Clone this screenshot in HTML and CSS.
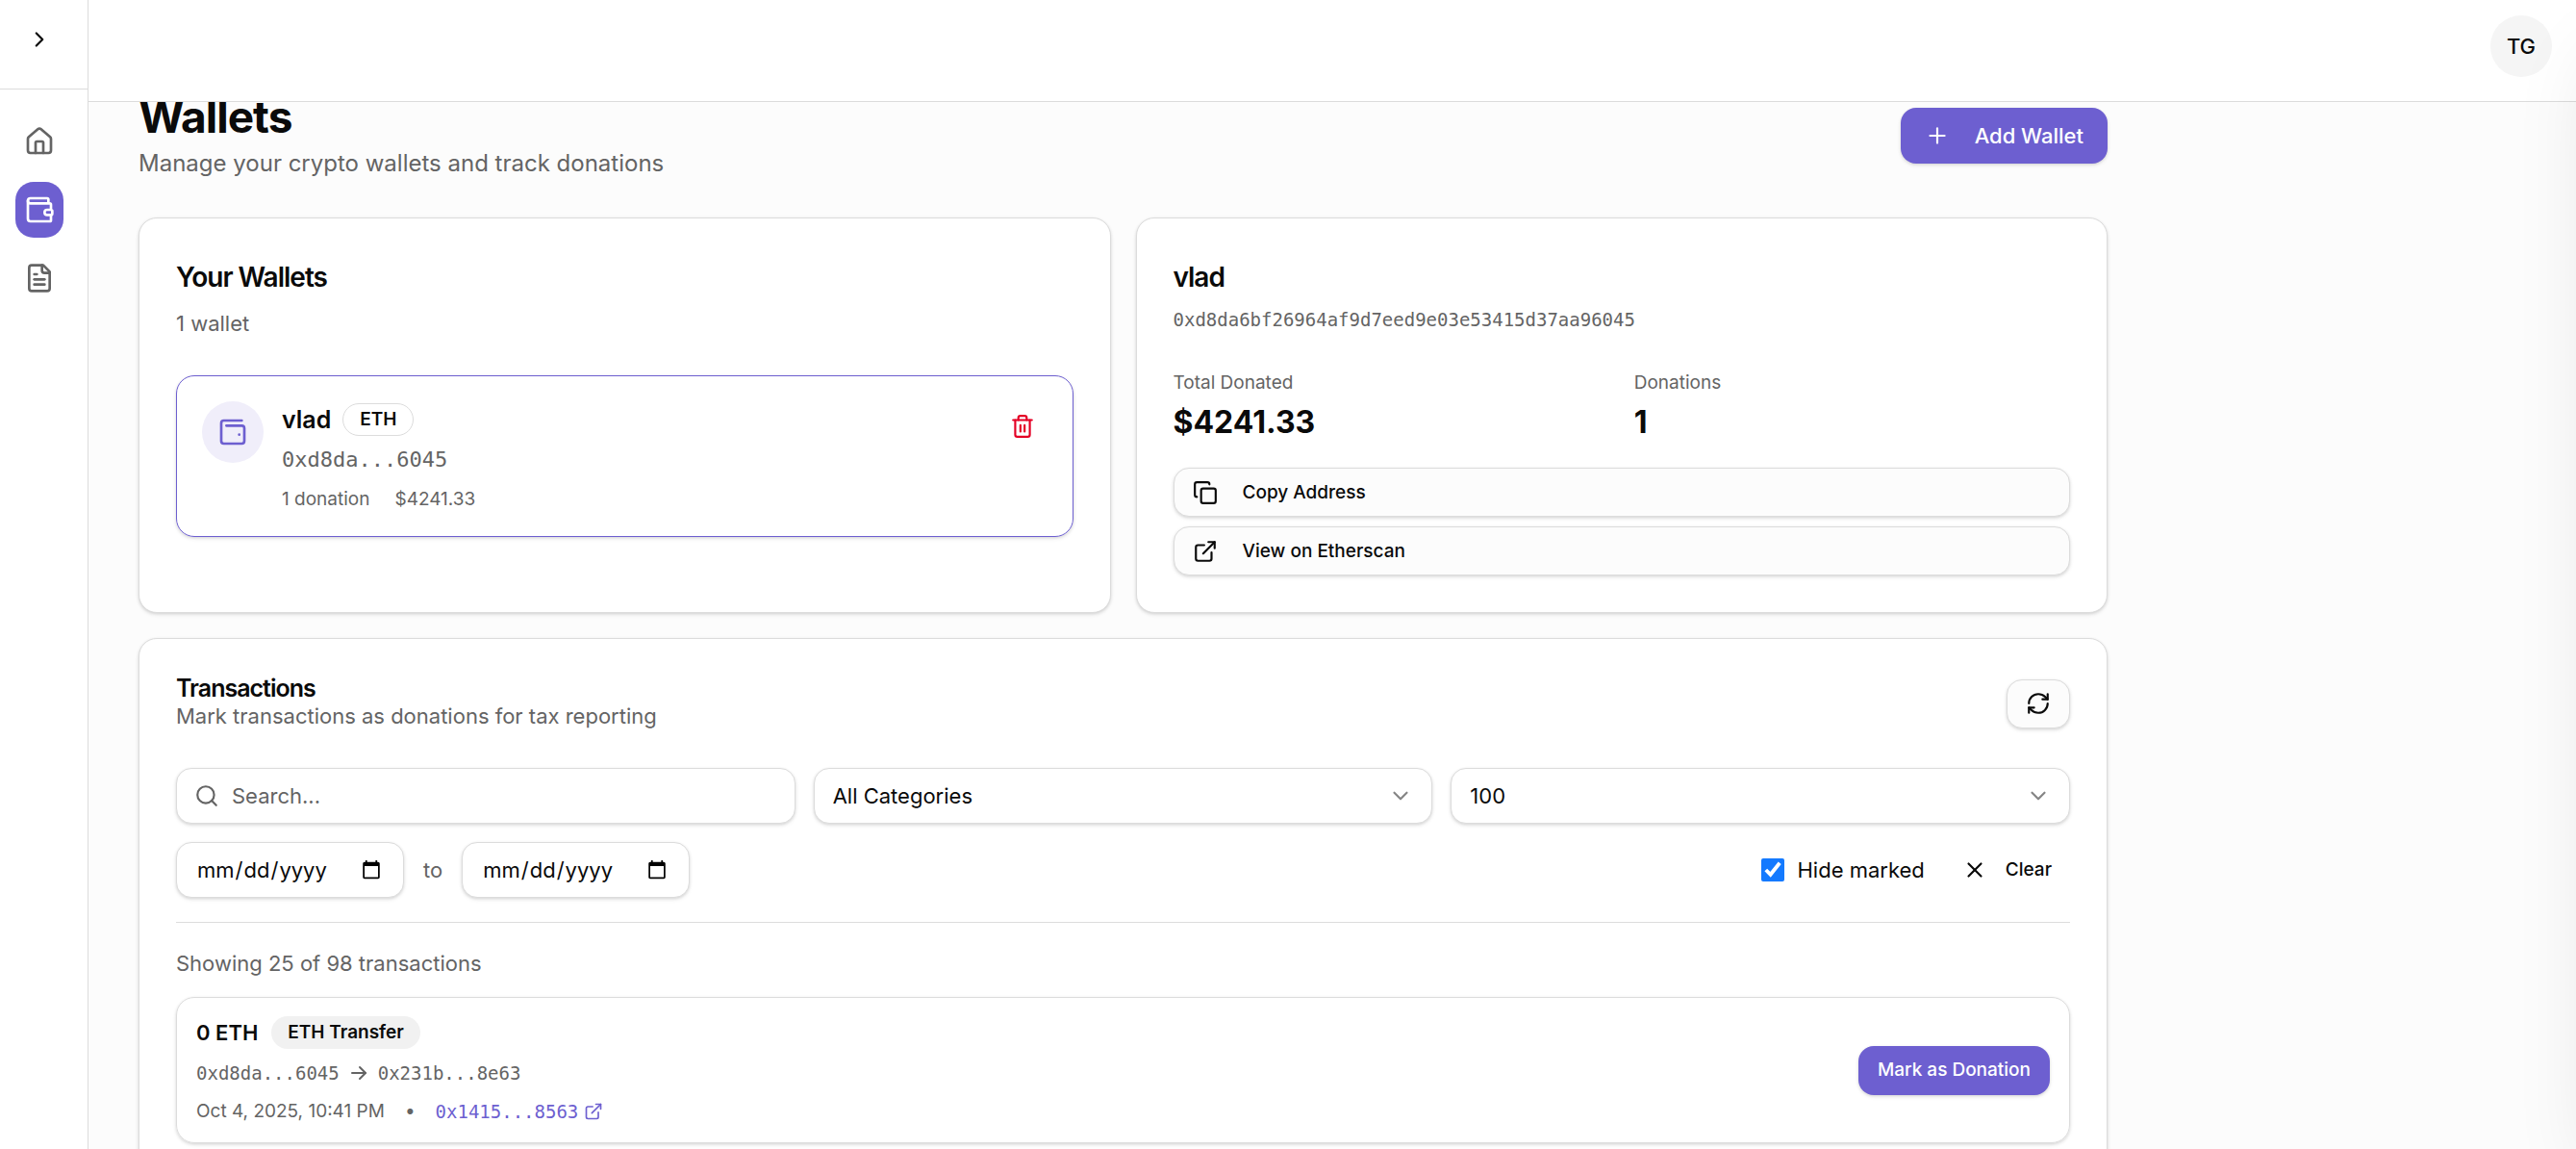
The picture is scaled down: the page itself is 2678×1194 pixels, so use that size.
FILE: index.html
```html
<!DOCTYPE html>
<html lang="en">
<head>
<meta charset="utf-8">
<meta name="viewport" content="width=device-width, initial-scale=1">
<title>Wallets</title>
<link rel="stylesheet" href="styles.css">
</head>
<body>
<div class="app">
  <aside class="sidebar">
    <div class="sidebar-head">
      <button class="toggle" type="button" aria-label="Expand sidebar">
        <svg class="icon icon-md" viewBox="0 0 24 24"><path d="m9 18 6-6-6-6"/></svg>
      </button>
    </div>
    <nav class="nav">
      <a class="nav-link" href="#home" aria-label="Home">
        <svg class="icon icon-lg" viewBox="0 0 24 24"><path d="M15 21v-8a1 1 0 0 0-1-1h-4a1 1 0 0 0-1 1v8"/><path d="M3 10a2 2 0 0 1 .709-1.528l7-5.999a2 2 0 0 1 2.582 0l7 5.999A2 2 0 0 1 21 10v9a2 2 0 0 1-2 2H5a2 2 0 0 1-2-2z"/></svg>
      </a>
      <a class="nav-link active" href="#wallets" aria-label="Wallets">
        <svg class="icon icon-lg" viewBox="0 0 24 24"><path d="M19 7V4a1 1 0 0 0-1-1H5a2 2 0 0 0 0 4h15a1 1 0 0 1 1 1v4h-3a2 2 0 0 0 0 4h3a1 1 0 0 0 1-1v-2a1 1 0 0 0-1-1"/><path d="M3 5v14a2 2 0 0 0 2 2h15a1 1 0 0 0 1-1v-4"/></svg>
      </a>
      <a class="nav-link" href="#reports" aria-label="Reports">
        <svg class="icon icon-lg" viewBox="0 0 24 24"><path d="M15 2H6a2 2 0 0 0-2 2v16a2 2 0 0 0 2 2h12a2 2 0 0 0 2-2V7Z"/><path d="M14 2v4a2 2 0 0 0 2 2h4"/><path d="M10 9H8"/><path d="M16 13H8"/><path d="M16 17H8"/></svg>
      </a>
    </nav>
  </aside>

  <div class="main">
    <header class="topbar">
      <button class="avatar" type="button">TG</button>
    </header>

    <main class="viewport">
      <div class="page">
        <div class="page-head">
          <div>
            <h1 class="title">Wallets</h1>
            <p class="lead">Manage your crypto wallets and track donations</p>
          </div>
          <button class="btn btn-primary btn-add" type="button">
            <svg class="icon icon-md" viewBox="0 0 24 24"><path d="M5 12h14"/><path d="M12 5v14"/></svg>
            Add Wallet
          </button>
        </div>

        <div class="cards">
          <section class="card">
            <h2 class="card-title">Your Wallets</h2>
            <p class="card-sub">1 wallet</p>
            <div class="wallet">
              <span class="wallet-icon">
                <svg class="icon icon-lg" viewBox="0 0 24 24"><path d="M17 14h.01"/><path d="M7 7h12a2 2 0 0 1 2 2v10a2 2 0 0 1-2 2H5a2 2 0 0 1-2-2V5a2 2 0 0 1 2-2h14"/></svg>
              </span>
              <div class="wallet-body">
                <div class="wallet-name"><strong class="name">vlad</strong><span class="badge badge-outline">ETH</span></div>
                <p class="wallet-address">0xd8da...6045</p>
                <p class="wallet-stats"><span>1 donation</span><span>$4241.33</span></p>
              </div>
              <button class="delete" type="button" aria-label="Delete wallet">
                <svg class="icon icon-md" viewBox="0 0 24 24"><path d="M10 11v6"/><path d="M14 11v6"/><path d="M19 6v14a2 2 0 0 1-2 2H7a2 2 0 0 1-2-2V6"/><path d="M3 6h18"/><path d="M8 6V4a2 2 0 0 1 2-2h4a2 2 0 0 1 2 2v2"/></svg>
              </button>
            </div>
          </section>

          <section class="card">
            <h2 class="card-title">vlad</h2>
            <p class="full-address">0xd8da6bf26964af9d7eed9e03e53415d37aa96045</p>
            <dl class="stats">
              <div><dt>Total Donated</dt><dd>$4241.33</dd></div>
              <div><dt>Donations</dt><dd>1</dd></div>
            </dl>
            <div class="actions">
              <button class="btn btn-outline btn-row" type="button">
                <svg class="icon icon-md" viewBox="0 0 24 24"><rect width="14" height="14" x="8" y="8" rx="2" ry="2"/><path d="M4 16c-1.1 0-2-.9-2-2V4c0-1.1.9-2 2-2h10c1.1 0 2 .9 2 2"/></svg>
                Copy Address
              </button>
              <a class="btn btn-outline btn-row" href="#etherscan">
                <svg class="icon icon-md" viewBox="0 0 24 24"><path d="M15 3h6v6"/><path d="M10 14 21 3"/><path d="M18 13v6a2 2 0 0 1-2 2H5a2 2 0 0 1-2-2V8a2 2 0 0 1 2-2h6"/></svg>
                View on Etherscan
              </a>
            </div>
          </section>
        </div>

        <section class="card">
          <div class="tx-head">
            <div>
              <h2 class="tx-title">Transactions</h2>
              <p class="tx-sub">Mark transactions as donations for tax reporting</p>
            </div>
            <button class="btn btn-outline" type="button" aria-label="Refresh">
              <svg class="icon icon-md" viewBox="0 0 24 24"><path d="M3 12a9 9 0 0 1 9-9 9.75 9.75 0 0 1 6.74 2.74L21 8"/><path d="M21 3v5h-5"/><path d="M21 12a9 9 0 0 1-9 9 9.75 9.75 0 0 1-6.74-2.74L3 16"/><path d="M8 16H3v5"/></svg>
            </button>
          </div>

          <form class="filters">
            <label class="field search">
              <svg class="icon icon-md" viewBox="0 0 24 24"><path d="m21 21-4.34-4.34"/><circle cx="11" cy="11" r="8"/></svg>
              <input type="text" placeholder="Search..." aria-label="Search transactions">
            </label>
            <label class="field picker">
              <select aria-label="Category"><option>All Categories</option></select>
              <svg class="icon icon-md" viewBox="0 0 24 24"><path d="m6 9 6 6 6-6"/></svg>
            </label>
            <label class="field picker">
              <select aria-label="Page size"><option>100</option></select>
              <svg class="icon icon-md" viewBox="0 0 24 24"><path d="m6 9 6 6 6-6"/></svg>
            </label>
          </form>

          <div class="range">
            <input class="field date" type="date" aria-label="From date">
            <span class="to">to</span>
            <input class="field date" type="date" aria-label="To date">
            <label class="hide-marked"><input type="checkbox" checked>Hide marked</label>
            <button class="clear" type="button">
              <svg class="icon icon-md" viewBox="0 0 24 24"><path d="M18 6 6 18"/><path d="m6 6 12 12"/></svg>
              Clear
            </button>
          </div>

          <p class="count">Showing 25 of 98 transactions</p>

          <article class="tx">
            <div class="tx-body">
              <div class="tx-line"><strong class="amount">0 ETH</strong><span class="badge badge-solid">ETH Transfer</span></div>
              <p class="tx-route">0xd8da...6045 <svg class="icon icon-sm" viewBox="0 0 20 20"><path d="M3 10h14"/><path d="m11 4 6 6-6 6"/></svg> 0x231b...8e63</p>
              <p class="tx-meta">
                <span>Oct 4, 2025, 10:41 PM</span><span>•</span>
                <a class="hash" href="#tx">0x1415...8563<svg class="icon icon-sm" viewBox="0 0 24 24"><path d="M15 3h6v6"/><path d="M10 14 21 3"/><path d="M18 13v6a2 2 0 0 1-2 2H5a2 2 0 0 1-2-2V8a2 2 0 0 1 2-2h6"/></svg></a>
              </p>
            </div>
            <button class="btn btn-primary btn-mark" type="button">Mark as Donation</button>
          </article>
        </section>
      </div>
    </main>
  </div>
</div>
</body>
</html>
```

FILE: styles.css
```css
:root {
  --ink: #0a0a0a;
  --muted: #646464;
  --line: #dcdcdc;
  --primary: #6d5fd0;
  --surface: #fcfcfc;
  --shadow: 0 1px 3px rgba(0, 0, 0, .1), 0 2px 4px rgba(0, 0, 0, .08);
  --mono: "DejaVu Sans Mono", monospace;
}

* { box-sizing: border-box; }

body {
  margin: 0;
  background: var(--surface);
  color: var(--ink);
  font: 400 22px/32px Inter, sans-serif;
}

h1, h2, p, dl, dd { margin: 0; }
button, input, select { font: inherit; color: inherit; }
button { cursor: pointer; border: 0; background: none; padding: 0; }
a { color: inherit; text-decoration: none; }

.icon {
  flex: none;
  fill: none;
  stroke: currentColor;
  stroke-width: 2;
  stroke-linecap: round;
  stroke-linejoin: round;
}
.icon-sm { width: 20px; height: 20px; }
.icon-md { width: 26px; height: 26px; }
.icon-lg { width: 32px; height: 32px; }

.app { display: flex; height: 100vh; overflow: hidden; }

.app::after {
  content: "";
  position: fixed;
  top: 0;
  left: 100%;
  width: 480px;
  height: 100%;
  box-shadow: 0 40px 80px -20px rgba(0, 0, 0, .1);
  pointer-events: none;
}

/* Sidebar */
.sidebar {
  flex: none;
  width: 92px;
  border-right: 1px solid var(--line);
  background: #fff;
}
.sidebar-head {
  height: 93px;
  padding: 16px 16px 0;
  border-bottom: 1px solid var(--line);
}
.toggle { display: grid; place-items: center; width: 50px; height: 50px; }
.nav { display: grid; gap: 13px; padding: 25px 16px; }
.nav-link {
  display: grid;
  place-items: center;
  width: 50px;
  height: 58px;
  border-radius: 19px;
  color: var(--muted);
}
.nav-link.active { background: var(--primary); color: #fff; }

/* Top bar */
.main { display: flex; flex: 1; flex-direction: column; min-width: 0; }
.topbar {
  display: flex;
  flex: none;
  align-items: flex-start;
  justify-content: flex-end;
  height: 106px;
  padding: 16px 25px;
  border-bottom: 1px solid var(--line);
  background: #fff;
}
.avatar {
  width: 64px;
  height: 64px;
  border-radius: 50%;
  background: #f5f5f5;
  font-weight: 500;
}

/* Page */
.viewport { flex: 1; min-height: 0; overflow: hidden; padding: 0 52px; }
.page { display: grid; gap: 26px; max-width: 2047px; margin-top: -14px; }
.page-head {
  display: flex;
  align-items: center;
  justify-content: space-between;
  padding-bottom: 11px;
}
.title { font-size: 46px; line-height: 58px; font-weight: 700; letter-spacing: -1px; }
.lead { font-size: 24px; line-height: 39px; color: var(--muted); }

.cards { display: grid; grid-template-columns: 1fr 1fr; gap: 26px; }
.card {
  padding: 38px;
  border: 1px solid var(--line);
  border-radius: 19px;
  background: #fff;
  box-shadow: var(--shadow);
}
.card-title { font-size: 28px; line-height: 46px; font-weight: 600; letter-spacing: -1px; }
.card-sub { margin-top: 9px; color: var(--muted); }

/* Buttons */
.btn {
  display: inline-flex;
  align-items: center;
  height: 51px;
  padding: 0 19px;
  border-radius: 16px;
  font-size: 19px;
  font-weight: 500;
  box-shadow: var(--shadow);
}
.btn-primary { background: var(--primary); color: #fff; }
.btn-outline { border: 1px solid var(--line); background: var(--surface); }
.btn-add { gap: 26px; height: 58px; padding: 0 25px; font-size: 22px; }
.btn-row { gap: 26px; }
.btn-mark { padding: 0 20px; }

/* Wallet list */
.wallet {
  display: flex;
  gap: 19px;
  margin-top: 38px;
  padding: 26px;
  border: 1px solid var(--primary);
  border-radius: 19px;
  box-shadow: var(--shadow);
}
.wallet-icon {
  display: grid;
  flex: none;
  place-items: center;
  width: 64px;
  height: 64px;
  border-radius: 50%;
  background: #f0eefa;
  color: var(--primary);
}
.wallet-body { flex: 1; }
.wallet-name { display: flex; align-items: center; gap: 12px; height: 38px; }
.name { font-size: 25px; font-weight: 600; }
.wallet-address { margin-top: 7px; font-family: var(--mono); color: var(--muted); }
.wallet-stats { display: flex; gap: 26px; margin-top: 13px; font-size: 19px; line-height: 24px; color: var(--muted); }
.delete { display: grid; place-items: center; width: 51px; height: 51px; color: #e40025; }

.badge {
  display: inline-flex;
  align-items: center;
  height: 34px;
  padding: 0 17px;
  border-radius: 17px;
  font-size: 19px;
  font-weight: 600;
}
.badge-outline { border: 1px solid var(--line); }
.badge-solid { background: #f1f1f1; }

/* Wallet details */
.full-address { margin-top: 8px; font: 19px/26px var(--mono); color: var(--muted); }
.stats { display: grid; grid-template-columns: 1fr 1fr; gap: 26px; margin-top: 40px; }
.stats dt { font-size: 19px; line-height: 26px; color: var(--muted); }
.stats dd { margin-top: 6px; font-size: 32px; line-height: 44px; font-weight: 700; }
.actions { display: grid; gap: 10px; margin-top: 25px; }

/* Transactions */
.tx-head { display: flex; align-items: center; justify-content: space-between; }
.tx-title { font-size: 25px; line-height: 26px; font-weight: 600; letter-spacing: -1px; }
.tx-sub { color: var(--muted); }

.filters { display: grid; grid-template-columns: repeat(3, 1fr); gap: 19px; margin-top: 38px; }
.field {
  height: 58px;
  border: 1px solid var(--line);
  border-radius: 16px;
  background: #fff;
  box-shadow: var(--shadow);
}
.search { display: flex; align-items: center; gap: 13px; padding: 0 18px; color: var(--muted); }
.search input { flex: 1; min-width: 0; padding: 0; border: 0; outline: 0; background: none; }
.search input::placeholder { color: var(--muted); opacity: 1; }
.picker { display: grid; grid-template-columns: 1fr auto; align-items: center; padding-right: 19px; }
.picker select {
  grid-area: 1 / 1 / 2 / 3;
  height: 56px;
  padding: 0 19px;
  border: 0;
  outline: 0;
  background: none;
  appearance: none;
}
.picker .icon { grid-area: 1 / 2; color: #858585; pointer-events: none; }

.range {
  display: flex;
  align-items: center;
  gap: 20px;
  margin-top: 19px;
  padding-bottom: 25px;
  border-bottom: 1px solid var(--line);
}
.date { width: 237px; padding: 0 20px; }
.to { color: var(--muted); }
.hide-marked { display: flex; align-items: center; gap: 13px; margin-left: auto; }
.hide-marked input { width: 24px; height: 24px; margin: 0; accent-color: #147aff; }
.clear { display: flex; align-items: center; gap: 19px; padding: 0 19px; font-size: 19px; font-weight: 500; }

.count { margin-top: 26px; color: var(--muted); }
.tx {
  display: flex;
  align-items: center;
  justify-content: space-between;
  margin-top: 19px;
  padding: 19px 20px;
  border: 1px solid var(--line);
  border-radius: 19px;
  box-shadow: var(--shadow);
}
.tx-line { display: flex; align-items: center; gap: 14px; height: 34px; }
.amount { font-weight: 600; }
.tx-route { display: flex; align-items: center; gap: 10px; margin-top: 9px; font: 19px/32px var(--mono); color: var(--muted); }
.tx-meta { display: flex; align-items: center; gap: 21px; margin-top: 11px; font-size: 19px; line-height: 26px; color: var(--muted); }
.hash { display: flex; align-items: center; gap: 6px; font-family: var(--mono); color: var(--primary); }
```
